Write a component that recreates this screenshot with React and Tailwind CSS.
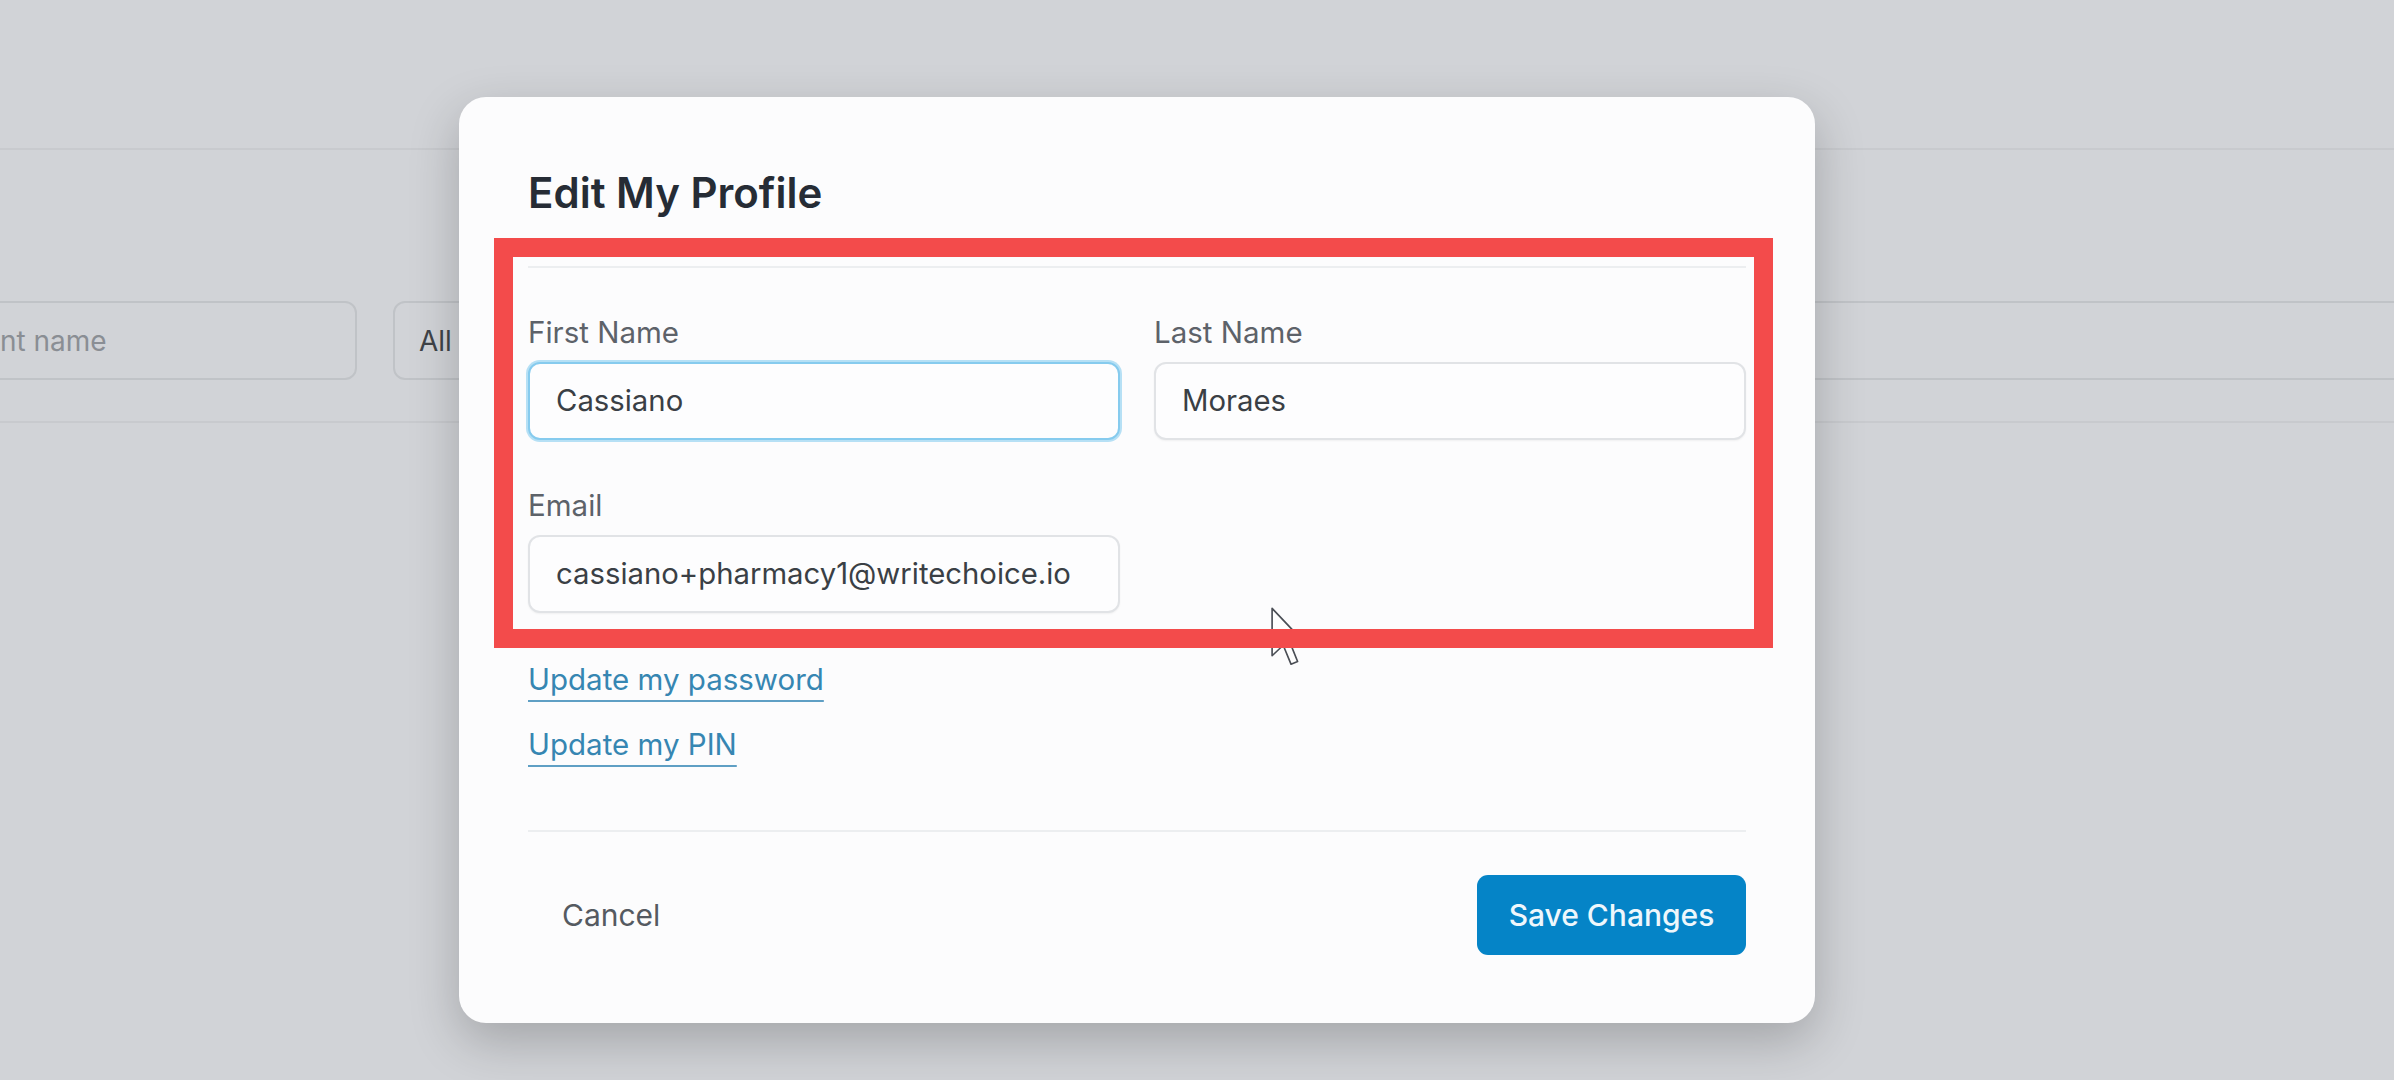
import React from "react";

function Field({ label, value, focused }) {
  return (
    <div className="flex flex-col">
      <label className="text-[29.5px] leading-[36px] text-[#5d6269] mb-[12px]">{label}</label>
      <div
        className={
          focused
            ? "h-[78px] rounded-[12px] border-2 border-[#86cbee] shadow-[0_0_0_2px_#b6e0f5] bg-[#fdfdfe] flex items-center pl-[26px] text-[29.3px] text-[#3a3f45]"
            : "h-[78px] rounded-[12px] border-2 border-[#e1e3e6] shadow-[0_1px_2px_rgba(0,0,0,0.05)] bg-[#fdfdfe] flex items-center pl-[26px] text-[29.3px] text-[#3a3f45]"
        }
      >
        {value}
      </div>
    </div>
  );
}

function Cursor() {
  return (
    <svg
      className="absolute left-[1270px] top-[606px]"
      width="36"
      height="62"
      viewBox="0 0 12 20.5"
    >
      <path
        d="M0.7 0.7 L0.7 16.5 L4.4 13 L7 19.3 L9.2 18.4 L6.7 12.2 L11.6 12.2 Z"
        fill="#fefefe"
        stroke="#4a4e55"
        strokeWidth="0.55"
        strokeLinejoin="round"
      />
    </svg>
  );
}

export default function App() {
  return (
    <div
      className="relative w-[2394px] h-[1080px] overflow-hidden bg-[#d1d3d7]"
      style={{ fontFamily: "Inter, 'Liberation Sans', sans-serif" }}
    >
      {/* page behind the overlay */}
      <div className="flex flex-col">
        <div className="h-[150px] border-b-2 border-[#c8cace]" />
        <div className="h-[273px] border-b-2 border-[#c8cace] flex items-start pt-[151px] gap-[36px]">
          <div className="-ml-[40px] w-[397px] h-[79px] rounded-[12px] border-2 border-[#c0c3c7] flex items-center pl-[38px] text-[28px] text-[#8a8e94]">
            nt name
          </div>
          <div className="w-[420px] h-[79px] rounded-[12px] border-2 border-[#c0c3c7] flex items-center pl-[24px] text-[28px] text-[#3f4348]">
            All
          </div>
          <div className="flex-1 -mr-[40px] h-[79px] rounded-[12px] border-2 border-[#c0c3c7]" />
        </div>
      </div>

      {/* modal */}
      <div className="absolute left-[459px] top-[97px] w-[1356px] h-[926px] rounded-[27px] bg-[#fcfcfd] shadow-[0_18px_50px_rgba(0,0,0,0.22)] px-[69px] pt-[71px] flex flex-col">
        <h2 className="text-[42px] leading-[50px] font-semibold text-[#262c35]">Edit My Profile</h2>
        <div className="mt-[48px] h-[2px] bg-[#eceef0]" />

        <div className="mt-[46px] grid grid-cols-2 gap-x-[34px] gap-y-[47px]">
          <Field label="First Name" value="Cassiano" focused />
          <Field label="Last Name" value="Moraes" />
          <Field label="Email" value="cassiano+pharmacy1@writechoice.io" />
        </div>

        <div className="mt-[48px] flex flex-col items-start gap-[29px] text-[29.5px] leading-[36px] text-[#3686b2]">
          <a className="underline decoration-2 underline-offset-[10px] decoration-[#5f9fc4]">Update my password</a>
          <a className="underline decoration-2 underline-offset-[10px] decoration-[#5f9fc4]">Update my PIN</a>
        </div>

        <div className="mt-[68px] h-[2px] bg-[#eceef0]" />

        <div className="mt-[43px] flex items-center justify-between">
          <button className="h-[80px] px-[34px] text-[30px] text-[#555a61]">Cancel</button>
          <button className="h-[80px] w-[269px] rounded-[11px] bg-[#0584c7] text-[30px] font-medium text-[#eef7fc]">
            Save Changes
          </button>
        </div>
      </div>

      <Cursor />

      {/* annotation */}
      <div className="absolute left-[494px] top-[238px] w-[1279px] h-[410px] border-[19px] border-[#f34b4b]" />
    </div>
  );
}
